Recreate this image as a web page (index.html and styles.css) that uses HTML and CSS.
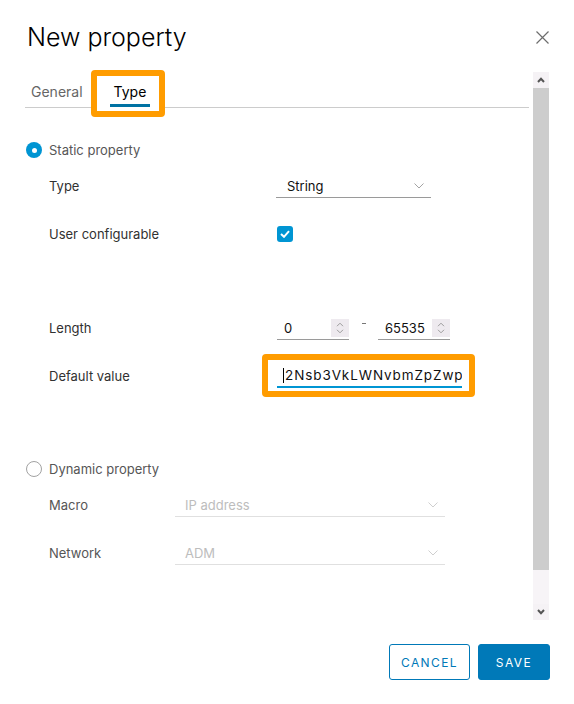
FILE: index.html
```html
<!DOCTYPE html>
<html lang="en">
<head>
<meta charset="utf-8">
<title>New property</title>
<link rel="stylesheet" href="styles.css">
</head>
<body>
<div class="dialog">
  <header class="dialog-header">
    <h1 class="title">New property</h1>
    <button class="close" aria-label="Close">
      <svg width="15" height="15" viewBox="0 0 15 15"><path d="M1.5 1.5L13.5 13.5M13.5 1.5L1.5 13.5" stroke="#6d6d6d" stroke-width="1.2" fill="none"/></svg>
    </button>
  </header>

  <div class="dialog-body">
    <div class="content">
      <nav class="tabs">
        <span class="tab"><span class="tab-label">General</span></span>
        <span class="tab tab-active"><span class="highlight hl-tab"></span><span class="tab-label">Type</span></span>
      </nav>

      <div class="form">
        <div class="row radio-row r-static">
          <span class="radio radio-on"></span>
          <span class="radio-text">Static property</span>
        </div>

        <div class="row field r-type">
          <span class="label">Type</span>
          <div class="select">
            <span>String</span>
            <svg width="10" height="6" viewBox="0 0 10 6"><path d="M0.5 0.5L5 5L9.5 0.5" stroke="#a3a3a3" stroke-width="1" fill="none"/></svg>
          </div>
        </div>

        <div class="row field r-user">
          <span class="label">User configurable</span>
          <span class="checkbox">
            <svg width="10" height="8" viewBox="0 0 10 8"><path d="M1 4L4 6.8L9 1.2" stroke="#fff" stroke-width="2" fill="none"/></svg>
          </span>
        </div>

        <div class="row field r-length">
          <span class="label">Length</span>
          <div class="num">
            <span>0</span>
            <span class="spin">
              <svg width="8" height="5" viewBox="0 0 8 5"><path d="M1 4.2L4 1.2L7 4.2" stroke="#9c9c9c" stroke-width="1" fill="none"/></svg>
              <svg width="8" height="5" viewBox="0 0 8 5"><path d="M1 0.8L4 3.8L7 0.8" stroke="#9c9c9c" stroke-width="1" fill="none"/></svg>
            </span>
          </div>
          <span class="dash"></span>
          <div class="num">
            <span>65535</span>
            <span class="spin">
              <svg width="8" height="5" viewBox="0 0 8 5"><path d="M1 4.2L4 1.2L7 4.2" stroke="#9c9c9c" stroke-width="1" fill="none"/></svg>
              <svg width="8" height="5" viewBox="0 0 8 5"><path d="M1 0.8L4 3.8L7 0.8" stroke="#9c9c9c" stroke-width="1" fill="none"/></svg>
            </span>
          </div>
        </div>

        <div class="row field r-default">
          <span class="label">Default value</span>
          <div class="text-wrap">
            <span class="highlight hl-input"></span>
            <div class="text-input"><span class="caret"></span>2Nsb3VkLWNvbmZpZwp</div>
          </div>
        </div>

        <div class="row radio-row r-dynamic">
          <span class="radio"></span>
          <span class="radio-text">Dynamic property</span>
        </div>

        <div class="row field dyn r-macro">
          <span class="label">Macro</span>
          <div class="select select-off">
            <span>IP address</span>
            <svg width="10" height="6" viewBox="0 0 10 6"><path d="M0.5 0.5L5 5L9.5 0.5" stroke="#cfcfcf" stroke-width="1" fill="none"/></svg>
          </div>
        </div>

        <div class="row field dyn r-network">
          <span class="label">Network</span>
          <div class="select select-off">
            <span>ADM</span>
            <svg width="10" height="6" viewBox="0 0 10 6"><path d="M0.5 0.5L5 5L9.5 0.5" stroke="#cfcfcf" stroke-width="1" fill="none"/></svg>
          </div>
        </div>
      </div>
    </div>

    <div class="scrollbar">
      <div class="sb-btn">
        <svg width="8" height="6" viewBox="0 0 8 6"><path d="M1 5L4 1.8L7 5" stroke="#555" stroke-width="2" fill="none"/></svg>
      </div>
      <div class="sb-thumb"></div>
      <div class="sb-track"></div>
      <div class="sb-btn">
        <svg width="8" height="6" viewBox="0 0 8 6"><path d="M1 1L4 4.2L7 1" stroke="#555" stroke-width="2" fill="none"/></svg>
      </div>
    </div>
  </div>

  <footer class="dialog-footer">
    <button class="btn btn-outline">Cancel</button>
    <button class="btn btn-primary">Save</button>
  </footer>
</div>
</body>
</html>
```

FILE: styles.css
```css
* { box-sizing: border-box; }

html, body {
  margin: 0;
  background: #fff;
}

body {
  font-family: Inter, "Noto Sans", sans-serif;
  color: #313131;
  width: 574px;
  height: 704px;
  overflow: hidden;
}

.dialog {
  display: flex;
  flex-direction: column;
  height: 704px;
}

/* header */
.dialog-header {
  display: flex;
  justify-content: space-between;
  align-items: flex-start;
  height: 72px;
  padding: 21px 24px 0 27px;
}

.title {
  margin: 0;
  font-size: 25px;
  font-weight: 300;
  line-height: 32px;
  color: #000;
}

.close {
  border: 0;
  background: none;
  padding: 0;
  margin-top: 9px;
  width: 15px;
  height: 15px;
  display: block;
}

.close svg { display: block; }

/* body */
.dialog-body {
  display: flex;
  gap: 4px;
  height: 548px;
  padding: 0 25px;
}

.content {
  flex: 1;
  min-width: 0;
}

/* tabs */
.tabs {
  display: flex;
  gap: 23px;
  padding-left: 2px;
  border-bottom: 1px solid #cccccc;
  height: 36px;
}

.tab {
  position: relative;
  display: block;
}

.tab-label {
  position: relative;
  z-index: 1;
  display: block;
  padding: 10px 4px 2px;
  font-size: 14px;
  line-height: 20px;
  color: #666;
  border-bottom: 3px solid transparent;
}

.tab-active .tab-label {
  color: #000;
  border-bottom-color: #0072a3;
}

.highlight {
  position: absolute;
  border: 6px solid #ff9c00;
  border-radius: 4px;
}

.hl-tab {
  z-index: 0;
  left: -19px;
  right: -15px;
  top: -2px;
  bottom: -10px;
  background: #fff;
}

/* form */
.form {
  display: flex;
  flex-direction: column;
}

.row {
  display: flex;
  align-items: center;
  height: 24px;
  font-size: 13px;
}

.r-static { margin-top: 30px; }
.r-type { margin-top: 12px; }
.r-user { margin-top: 24px; }
.r-length { margin-top: 70px; }
.r-default { margin-top: 24px; }
.r-dynamic { margin-top: 69px; }
.r-macro { margin-top: 12px; }
.r-network { margin-top: 24px; }

.radio-row {
  gap: 7px;
  padding-left: 1px;
}

.radio {
  width: 16px;
  height: 16px;
  border-radius: 50%;
  border: 1px solid #a2a2a2;
  background: #fff;
  display: flex;
  align-items: center;
  justify-content: center;
}

.radio-on {
  border: 0;
  background: #0095d3;
}

.radio-on::after {
  content: "";
  width: 5px;
  height: 5px;
  border-radius: 50%;
  background: #fff;
}

.radio-text {
  color: #565656;
}

.field {
  padding-left: 24px;
}

.label {
  width: 228px;
  flex: none;
}

.dyn .label {
  width: 126px;
  color: #565656;
}

.select {
  display: flex;
  align-items: center;
  justify-content: space-between;
  width: 155px;
  height: 24px;
  margin-left: -1px;
  padding: 0 7px 0 11px;
  border-bottom: 1px solid #9a9a9a;
  color: #111;
}

.select-off {
  width: 270px;
  margin-left: 0;
  padding-left: 10px;
  border-bottom-color: #e0e0e0;
  color: #bdbdbd;
}

.checkbox {
  width: 16px;
  height: 16px;
  border-radius: 3px;
  background: #0095d3;
  display: flex;
  align-items: center;
  justify-content: center;
}

.num {
  display: flex;
  align-items: center;
  justify-content: space-between;
  width: 72px;
  height: 24px;
  padding-left: 7px;
  border-bottom: 1px solid #9a9a9a;
  color: #111;
}

.spin {
  width: 18px;
  height: 18px;
  background: #eeeaef;
  display: flex;
  flex-direction: column;
  align-items: center;
  justify-content: center;
  gap: 2px;
}

.spin svg { display: block; }

.dash {
  width: 4px;
  height: 1px;
  background: #777;
  margin: 0 12px 10px 13px;
}

.text-wrap {
  position: relative;
  width: 185px;
  height: 24px;
}

.hl-input {
  left: -15px;
  right: -13px;
  top: -10px;
  bottom: -9px;
}

.text-input {
  position: relative;
  display: flex;
  align-items: center;
  height: 24px;
  padding-left: 6px;
  border-bottom: 2px solid #0095d3;
  white-space: nowrap;
  overflow: hidden;
  color: #111;
  font-size: 13.5px;
  letter-spacing: 0.9px;
}

.caret {
  width: 1px;
  height: 15px;
  background: #000;
  margin-right: 1px;
  flex: none;
}

/* scrollbar */
.scrollbar {
  width: 16px;
  display: flex;
  flex-direction: column;
}

.sb-btn {
  height: 16px;
  background: #f5f2f5;
  display: flex;
  align-items: center;
  justify-content: center;
}

.sb-btn svg { display: block; }

.sb-thumb {
  height: 482px;
  background: #cdcdcd;
}

.sb-track {
  flex: 1;
  background: #f7f4f7;
}

/* footer */
.dialog-footer {
  display: flex;
  justify-content: flex-end;
  gap: 8px;
  padding: 24px 24px 0 0;
}

.btn {
  height: 36px;
  border-radius: 3px;
  font-family: Inter, "Noto Sans", sans-serif;
  font-size: 12px;
  letter-spacing: 1.4px;
  text-transform: uppercase;
  padding: 0;
  border: 1px solid #0079b8;
}

.btn-outline {
  width: 81px;
  background: #fff;
  color: #0079b8;
}

.btn-primary {
  width: 72px;
  background: #0079b8;
  color: #fff;
}
```
